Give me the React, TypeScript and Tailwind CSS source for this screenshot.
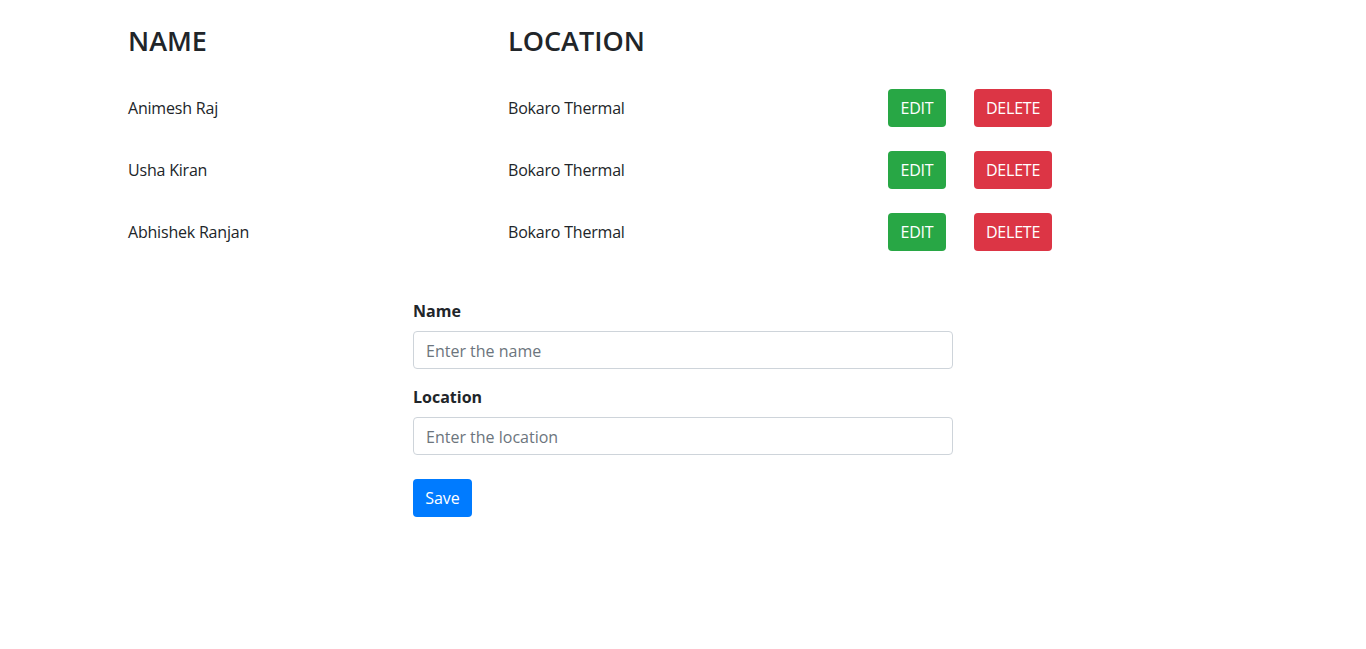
const people = [
  { name: "Animesh Raj", location: "Bokaro Thermal" },
  { name: "Usha Kiran", location: "Bokaro Thermal" },
  { name: "Abhishek Ranjan", location: "Bokaro Thermal" },
];

export default function App() {
  return (
    <div className="min-h-screen bg-white text-[#212529] text-base font-['Segoe_UI','Open_Sans',sans-serif]">
      {/* List */}
      <div className="pl-[128px] pt-[24px]">
        <div className="grid grid-cols-[380px_380px_86px_auto] items-center">
          <h3 className="text-[27px] leading-[34px] font-semibold">NAME</h3>
          <h3 className="text-[27px] leading-[34px] font-semibold">LOCATION</h3>
          <div />
          <div />
        </div>
        <div className="mt-[31px] flex flex-col gap-6">
          {people.map((p) => (
            <div key={p.name} className="grid grid-cols-[380px_380px_86px_auto] items-center">
              <span className="tracking-[-0.2px]">{p.name}</span>
              <span className="tracking-[-0.2px]">{p.location}</span>
              <div>
                <button className="h-[38px] w-[58px] rounded bg-[#28a745] text-white tracking-[-0.2px]">EDIT</button>
              </div>
              <div>
                <button className="h-[38px] w-[78px] rounded bg-[#dc3545] text-white tracking-[-0.2px]">DELETE</button>
              </div>
            </div>
          ))}
        </div>
      </div>

      {/* Form */}
      <form className="ml-[413px] mt-[48px] w-[540px]">
        <div className="mb-4">
          <label className="mb-2 block font-bold leading-6">Name</label>
          <input
            type="text"
            placeholder="Enter the name"
            className="h-[38px] w-full rounded border border-[#ced4da] px-3 pt-[1px] placeholder:text-[#6c757d]"
          />
        </div>
        <div className="mb-6">
          <label className="mb-2 block font-bold leading-6">Location</label>
          <input
            type="text"
            placeholder="Enter the location"
            className="h-[38px] w-full rounded border border-[#ced4da] px-3 pt-[1px] placeholder:text-[#6c757d]"
          />
        </div>
        <button type="button" className="h-[38px] w-[59px] rounded bg-[#007bff] text-white">
          Save
        </button>
      </form>
    </div>
  );
}
